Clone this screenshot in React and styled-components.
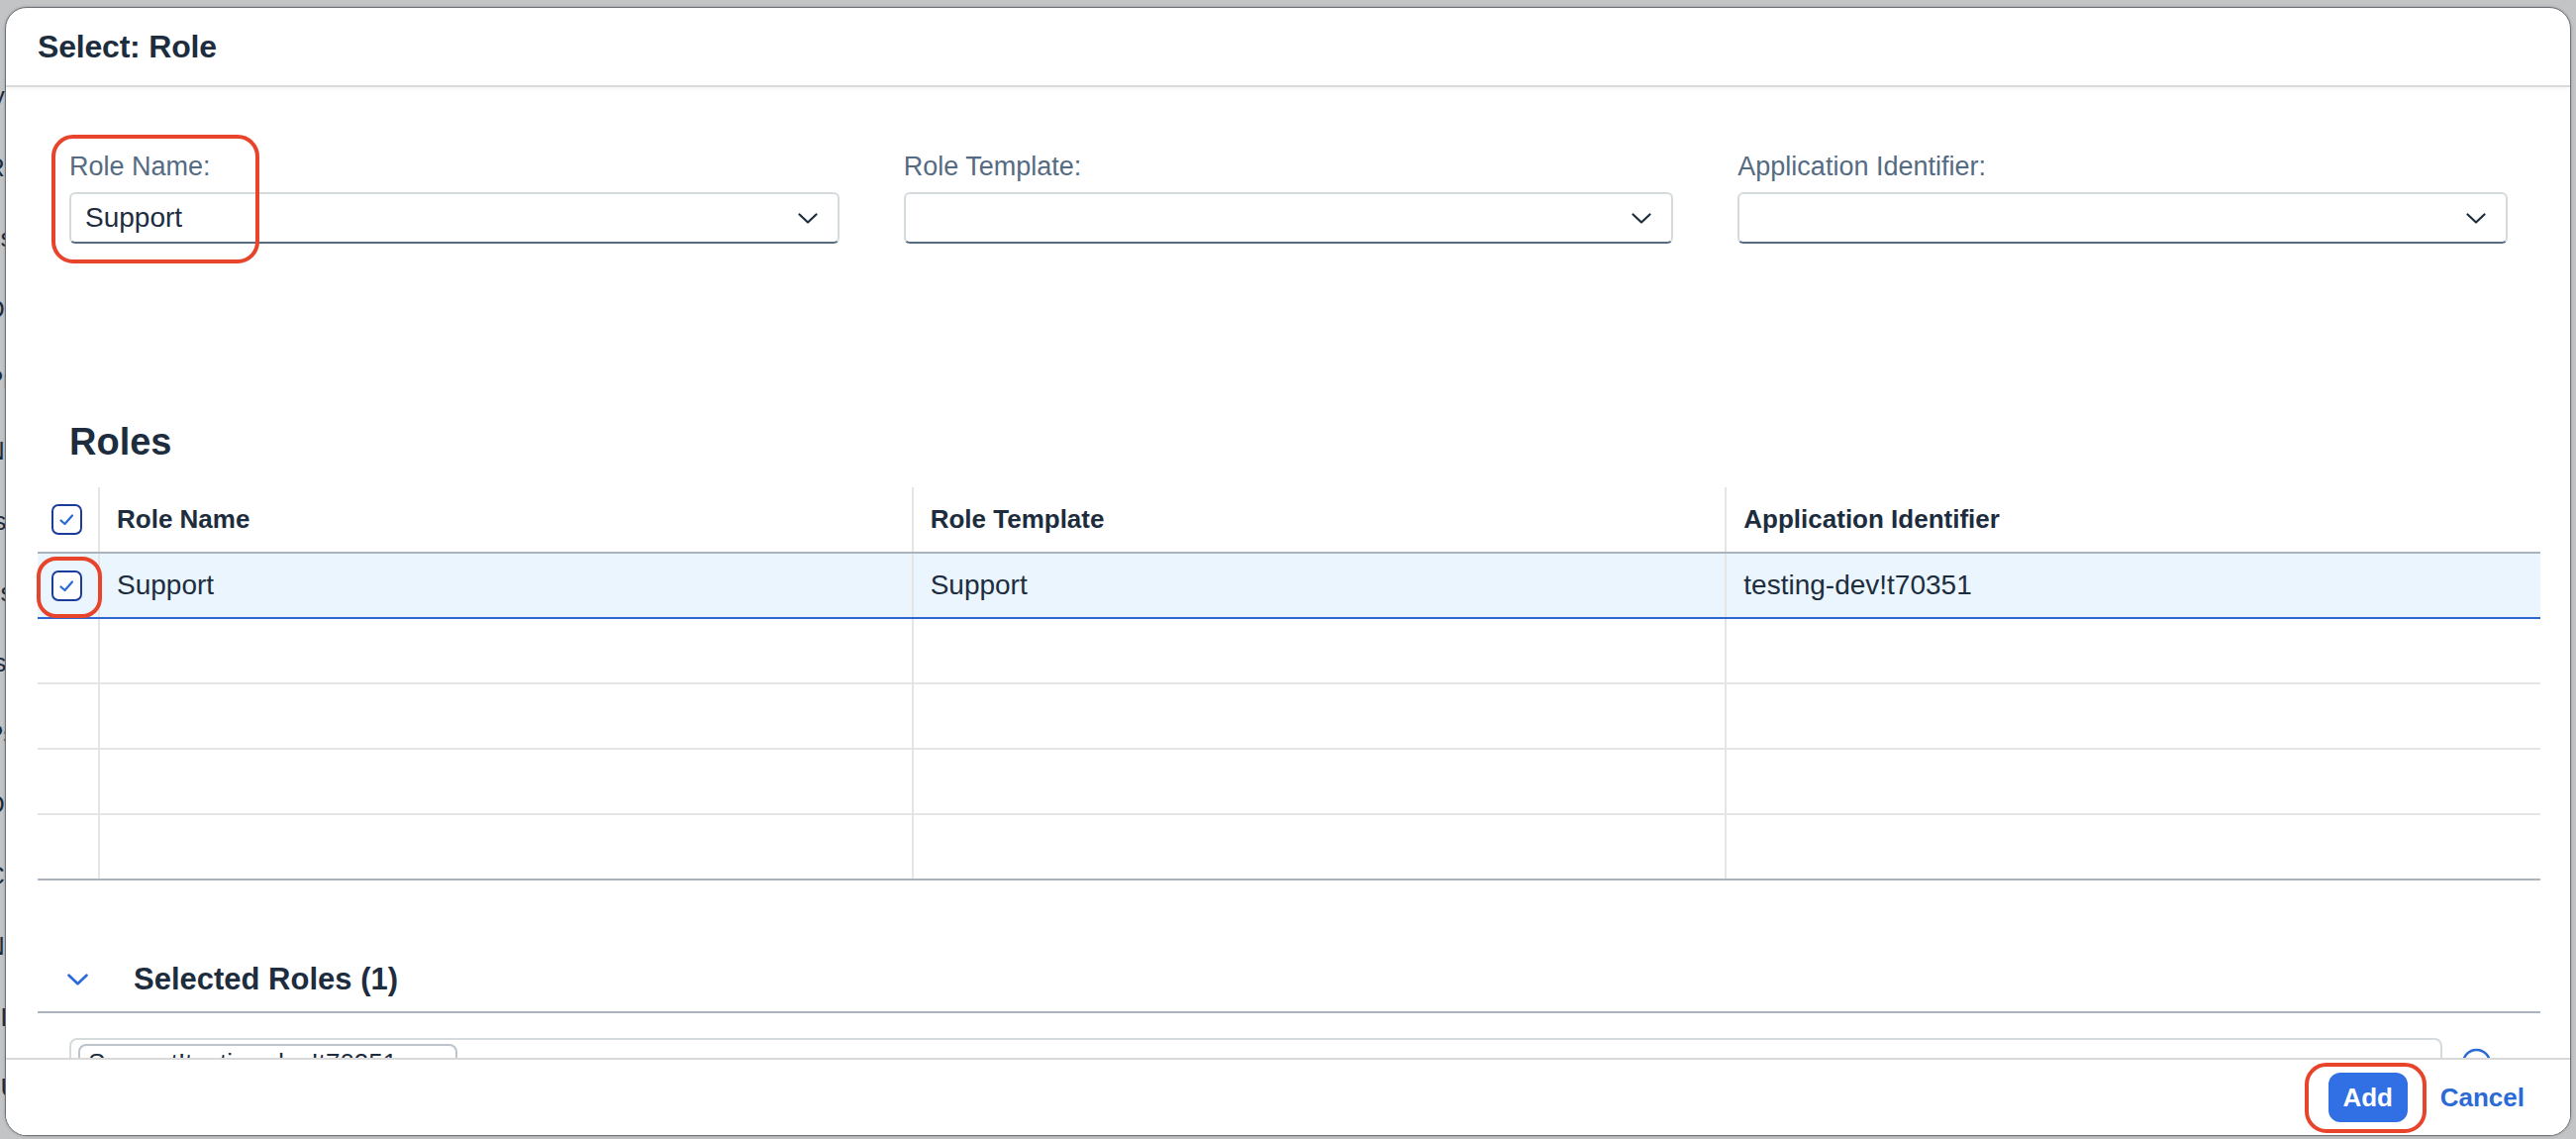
import React from "react";
import styled, { createGlobalStyle } from "styled-components";

const GlobalStyle = createGlobalStyle`
  html, body { margin: 0; padding: 0; background: #c3c4c6; }
  body { font-family: "Liberation Sans", Arial, sans-serif; color: #1d2d3e; }
  *, *::before, *::after { box-sizing: border-box; }
`;

const Root = styled.div`
  position: relative;
  width: 2602px;
  height: 1150px;
  overflow: hidden;
  background: #c3c4c6;
`;

const Backdrop = styled.div`
  display: flex;
  flex-direction: column;
  padding-top: 62px;
  margin-left: -14px;
`;

const BackdropLine = styled.div`
  font-size: 26px;
  line-height: 71.5px;
  height: 71.5px;
  color: #1d2d3e;
  white-space: nowrap;
`;

const Dialog = styled.div`
  position: absolute;
  left: 5px;
  top: 7px;
  width: 2592px;
  height: 1140px;
  background: #ffffff;
  border: 1px solid #6d7177;
  border-radius: 22px;
  box-shadow: 0 0 3px rgba(0, 0, 0, 0.25);
  display: flex;
  flex-direction: column;
  overflow: hidden;
`;

const Header = styled.header`
  flex: 0 0 80px;
  display: flex;
  align-items: center;
  padding-left: 32px;
  border-bottom: 2px solid #dadada;
  box-shadow: 0 2px 4px rgba(0, 0, 0, 0.04);
  position: relative;
  z-index: 1;
`;

const Title = styled.h1`
  margin: 0;
  font-size: 32px;
  font-weight: 700;
  color: #1d2d3e;
  letter-spacing: -0.2px;
`;

const Content = styled.main`
  flex: 1;
  overflow: hidden;
  padding: 0 30px 0 32px;
`;

const FilterBar = styled.div`
  display: grid;
  grid-template-columns: repeat(3, 1fr);
  column-gap: 65px;
  padding: 65px 33px 0 32px;
`;

const Field = styled.div`
  display: flex;
  flex-direction: column;
`;

const Label = styled.label`
  font-size: 27px;
  line-height: 30px;
  color: #556b82;
  margin-bottom: 11px;
`;

const Select = styled.div`
  height: 52px;
  display: flex;
  align-items: center;
  justify-content: space-between;
  padding: 0 20px 0 14px;
  background: #ffffff;
  border: 2px solid #d5dadd;
  border-bottom: 2px solid #556b82;
  border-radius: 6px;
  font-size: 28px;
  color: #1d2d3e;
`;

const SectionTitle = styled.h2`
  margin: 178px 0 0 32px;
  font-size: 38px;
  line-height: 44px;
  font-weight: 700;
  color: #1d2d3e;
`;

const Table = styled.div`
  margin-top: 24px;
  display: flex;
  flex-direction: column;
`;

const Row = styled.div`
  display: grid;
  grid-template-columns: 63px 1fr 1fr 1fr;
  height: ${(p) => (p.$head ? 67 : 66)}px;
  background: ${(p) => (p.$selected ? "#ebf5fe" : "#ffffff")};
  border-bottom: 2px solid
    ${(p) => (p.$head || p.$last ? "#a9b4be" : p.$selected ? "#2e67cf" : "#e5e5e5")};
`;

const Cell = styled.div`
  display: flex;
  align-items: center;
  justify-content: ${(p) => (p.$center ? "center" : "flex-start")};
  padding-left: ${(p) => (p.$center ? 0 : 17)}px;
  border-right: ${(p) => (p.$lastCol ? "none" : "2px solid #e5e5e5")};
  font-size: ${(p) => (p.$head ? 26 : 28)}px;
  font-weight: ${(p) => (p.$head ? 700 : 400)};
  color: #1d2d3e;
  white-space: nowrap;
`;

const CheckBox = styled.span`
  width: 31px;
  height: 31px;
  border: 2px solid #1a3d9d;
  border-radius: 7px;
  background: #ffffff;
  display: inline-flex;
  align-items: center;
  justify-content: center;
  margin-right: 2px;
`;

const Panel = styled.section`
  margin-top: 68px;
`;

const PanelHeader = styled.div`
  height: 66px;
  display: flex;
  align-items: center;
  gap: 46px;
  padding-left: 30px;
  border-bottom: 2px solid #a9b4be;
`;

const PanelTitle = styled.span`
  font-size: 31px;
  font-weight: 700;
  color: #1d2d3e;
`;

const TokenArea = styled.div`
  display: flex;
  align-items: flex-start;
  margin-top: 25px;
  padding: 0 49px 0 32px;
  gap: 19px;
`;

const Tokenizer = styled.div`
  flex: 1;
  height: 64px;
  border: 2px solid #d5dadd;
  border-radius: 8px;
  padding: 4px 7px;
  display: flex;
  align-items: flex-start;
`;

const Token = styled.span`
  display: inline-flex;
  align-items: center;
  gap: 14px;
  height: 52px;
  padding: 2px 8px 2px 8px;
  border: 2px solid #bcc3ca;
  border-radius: 8px;
  font-size: 26px;
  line-height: 30px;
  align-self: flex-start;
  color: #1d2d3e;
  width: 383px;
`;

const TokenText = styled.span`
  align-self: flex-start;
`;

const ValueHelp = styled.span`
  width: 31px;
  height: 31px;
  margin-top: 10px;
  display: inline-flex;
`;

const Footer = styled.footer`
  flex: 0 0 78px;
  display: flex;
  align-items: center;
  justify-content: flex-end;
  gap: 21px;
  padding-right: 34px;
  border-top: 2px solid #d9d9d9;
  background: #ffffff;
  position: relative;
  z-index: 1;
`;

const Button = styled.button`
  height: 50px;
  min-width: ${(p) => (p.$emphasized ? 80 : 0)}px;
  padding: 0 12px;
  border: none;
  border-radius: 12px;
  background: ${(p) => (p.$emphasized ? "#306fe4" : "transparent")};
  color: ${(p) => (p.$emphasized ? "#ffffff" : "#2b6bd6")};
  font-family: "Liberation Sans", Arial, sans-serif;
  font-size: 26px;
  font-weight: 700;
  cursor: pointer;
`;

const Callout = styled.div`
  position: absolute;
  left: ${(p) => p.$x}px;
  top: ${(p) => p.$y}px;
  width: ${(p) => p.$w}px;
  height: ${(p) => p.$h}px;
  border: 4px solid #e8432b;
  border-radius: ${(p) => p.$r}px;
  pointer-events: none;
  z-index: 5;
`;

const Chevron = ({ color = "#1d2d3e", w = 20, h = 11, sw = 2.2 }) => (
  <svg width={w} height={h} viewBox="0 0 20 11" fill="none">
    <polyline
      points="1.5,1.5 10,9.5 18.5,1.5"
      stroke={color}
      strokeWidth={sw}
      strokeLinecap="round"
      strokeLinejoin="round"
    />
  </svg>
);

const Check = () => (
  <svg width="17" height="15" viewBox="0 0 17 15" fill="none">
    <polyline
      points="2.5,8.5 6.5,12 14,3.5"
      stroke="#2a6ad6"
      strokeWidth="2.2"
      strokeLinecap="round"
      strokeLinejoin="round"
    />
  </svg>
);

const backdropWords = [
  "ly", "Rr", "Lst", "Do", "Pr", "No", "Is", "Ls", "Is", "Ps", "Do", "Cc", "Ne", "LL", "LU",
];

const rows = [
  { name: "Support", template: "Support", app: "testing-dev!t70351", selected: true },
  { name: "", template: "", app: "" },
  { name: "", template: "", app: "" },
  { name: "", template: "", app: "" },
  { name: "", template: "", app: "", last: true },
];

export default function App() {
  return (
    <Root>
      <GlobalStyle />
      <Backdrop>
        {backdropWords.map((w, i) => (
          <BackdropLine key={i}>{w}</BackdropLine>
        ))}
      </Backdrop>

      <Dialog role="dialog" aria-label="Select: Role">
        <Header>
          <Title>Select: Role</Title>
        </Header>

        <Content>
          <FilterBar>
            <Field>
              <Label>Role Name:</Label>
              <Select>
                <span>Support</span>
                <Chevron />
              </Select>
            </Field>
            <Field>
              <Label>Role Template:</Label>
              <Select>
                <span />
                <Chevron />
              </Select>
            </Field>
            <Field>
              <Label>Application Identifier:</Label>
              <Select>
                <span />
                <Chevron />
              </Select>
            </Field>
          </FilterBar>

          <SectionTitle>Roles</SectionTitle>

          <Table>
            <Row $head>
              <Cell $center>
                <CheckBox>
                  <Check />
                </CheckBox>
              </Cell>
              <Cell $head>Role Name</Cell>
              <Cell $head>Role Template</Cell>
              <Cell $head $lastCol>
                Application Identifier
              </Cell>
            </Row>
            {rows.map((r, i) => (
              <Row key={i} $selected={r.selected} $last={r.last}>
                <Cell $center>
                  {r.selected ? (
                    <CheckBox>
                      <Check />
                    </CheckBox>
                  ) : null}
                </Cell>
                <Cell>{r.name}</Cell>
                <Cell>{r.template}</Cell>
                <Cell $lastCol>{r.app}</Cell>
              </Row>
            ))}
          </Table>

          <Panel>
            <PanelHeader>
              <Chevron color="#2b6bd8" w={21} h={12} sw={2.6} />
              <PanelTitle>Selected Roles (1)</PanelTitle>
            </PanelHeader>
            <TokenArea>
              <Tokenizer>
                <Token>
                  <TokenText>Support!testing-dev!t70351</TokenText>
                </Token>
              </Tokenizer>
              <ValueHelp>
                <svg width="31" height="31" viewBox="0 0 31 31" fill="none">
                  <circle cx="15.5" cy="15.5" r="13.5" stroke="#2b6bd6" strokeWidth="2.6" />
                </svg>
              </ValueHelp>
            </TokenArea>
          </Panel>
        </Content>

        <Footer>
          <Button $emphasized>Add</Button>
          <Button>Cancel</Button>
        </Footer>
      </Dialog>

      <Callout $x={52} $y={136} $w={210} $h={130} $r={22} />
      <Callout $x={37} $y={562} $w={66} $h={62} $r={20} />
      <Callout $x={2328} $y={1073} $w={123} $h={71} $r={22} />
    </Root>
  );
}
